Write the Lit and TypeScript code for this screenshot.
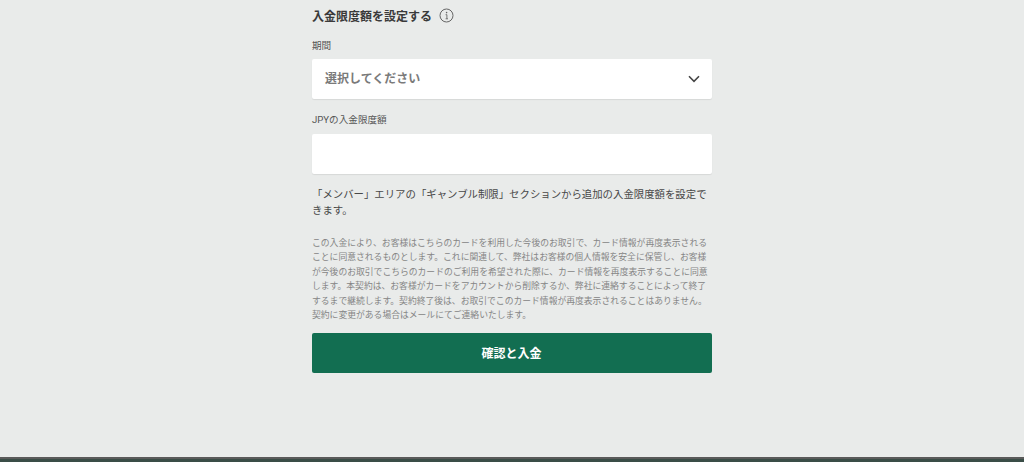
import { LitElement, html, css } from "lit";
import { customElement } from "lit/decorators.js";

@customElement("app-root")
export class AppRoot extends LitElement {
  static styles = css`
    :host {
      display: flex;
      flex-direction: column;
      height: 462px;
      overflow: hidden;
      background: #e9ebea;
      font-family: "Roboto", "Noto Sans CJK JP", sans-serif;
    }
    .main {
      flex: 1;
      min-height: 0;
      display: flex;
      justify-content: center;
    }
    .col {
      width: 400px;
      display: flex;
      flex-direction: column;
    }
    .title {
      display: flex;
      align-items: center;
      gap: 7px;
      height: 31px;
      font-size: 12px;
      font-weight: 700;
      color: #3a3a3a;
    }
    .title svg { display: block; }
    .label {
      margin-top: 8px;
      height: 20px;
      line-height: 14px;
      font-size: 9.6px;
      color: #555;
    }
    .field {
      height: 40px;
      background: #fff;
      border-radius: 2px;
      box-shadow: 0 1px 1px rgba(0, 0, 0, 0.08);
    }
    .select {
      display: flex;
      align-items: center;
      justify-content: space-between;
      padding: 0 12px 4px 13px;
      box-sizing: border-box;
      font-size: 12px;
      font-weight: 700;
      color: #7a7a7a;
    }
    .select svg { margin-top: 4px; }
    .label.second { margin-top: 14px; height: 21px; }
    .note {
      margin: 13px 0 0;
      font-size: 10.4px;
      line-height: 16px;
      color: #484848;
    }
    .legal {
      margin: 17px 0 0;
      font-size: 8.8px;
      line-height: 14.4px;
      color: #858585;
    }
    .button {
      margin-top: 11px;
      height: 40px;
      flex: none;
      border: 0;
      padding: 0 1px 2px 0;
      border-radius: 2px;
      background: #126e51;
      color: #fff;
      font: 700 12px "Roboto", "Noto Sans CJK JP", sans-serif;
    }
    .footer {
      flex: none;
      height: 3px;
      background: #3a4d47;
      border-top: 2px solid #5a5a5a;
    }
  `;

  render() {
    return html`
      <div class="main">
        <div class="col">
          <div class="title">
            <span>入金限度額を設定する</span>
            <svg width="15" height="15" viewBox="0 0 15 15" fill="none">
              <circle cx="7.5" cy="7.5" r="6.5" stroke="#666" stroke-width="1"></circle>
              <circle cx="7.6" cy="4.6" r="0.8" fill="#666"></circle>
              <path d="M6.6 6.7h1.3v4M6.6 10.8h2.4" stroke="#666" stroke-width="0.9"></path>
            </svg>
          </div>
          <div class="label">期間</div>
          <div class="field select">
            <span>選択してください</span>
            <svg width="12" height="8" viewBox="0 0 12 8" fill="none">
              <path d="M1 1.3l5 5 5-5" stroke="#444" stroke-width="1.6"></path>
            </svg>
          </div>
          <div class="label second">JPYの入金限度額</div>
          <div class="field"></div>
          <p class="note">「メンバー」エリアの「ギャンブル制限」セクションから追加の入金限度額を設定できます。</p>
          <p class="legal">この入金により、お客様はこちらのカードを利用した今後のお取引で、カード情報が再度表示されることに同意されるものとします。これに関連して、弊社はお客様の個人情報を安全に保管し、お客様が今後のお取引でこちらのカードのご利用を希望された際に、カード情報を再度表示することに同意します。本契約は、お客様がカードをアカウントから削除するか、弊社に連絡することによって終了するまで継続します。契約終了後は、お取引でこのカード情報が再度表示されることはありません。契約に変更がある場合はメールにてご連絡いたします。</p>
          <button class="button">確認と入金</button>
        </div>
      </div>
      <div class="footer"></div>
    `;
  }
}
